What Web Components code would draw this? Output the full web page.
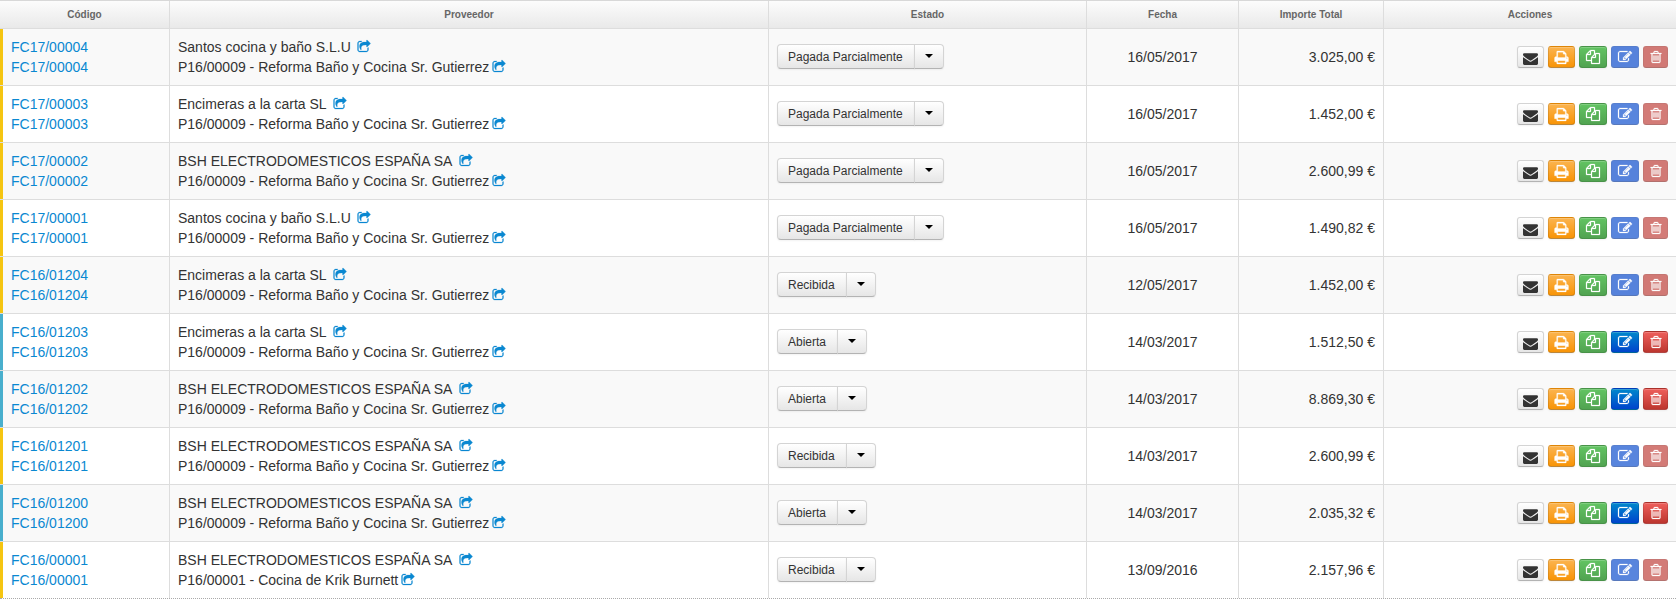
<!DOCTYPE html>
<html lang="es">
<head>
<meta charset="utf-8">
<title>Facturas</title>
<style>
  html, body { margin: 0; background: #fff; height: 599px; overflow: hidden; }
  body { font: 14px/20px "Liberation Sans", Arial, sans-serif; color: #333; }
</style>
</head>
<body>
<invoice-table>
  <invoice-header></invoice-header>
  <invoice-row code="FC17/00004" supplier="Santos cocina y baño S.L.U" project="P16/00009 - Reforma Baño y Cocina Sr. Gutierrez" status="Pagada Parcialmente" date="16/05/2017" total="3.025,00 €" locked></invoice-row>
  <invoice-row code="FC17/00003" supplier="Encimeras a la carta SL" project="P16/00009 - Reforma Baño y Cocina Sr. Gutierrez" status="Pagada Parcialmente" date="16/05/2017" total="1.452,00 €" locked></invoice-row>
  <invoice-row code="FC17/00002" supplier="BSH ELECTRODOMESTICOS ESPAÑA SA" project="P16/00009 - Reforma Baño y Cocina Sr. Gutierrez" status="Pagada Parcialmente" date="16/05/2017" total="2.600,99 €" locked></invoice-row>
  <invoice-row code="FC17/00001" supplier="Santos cocina y baño S.L.U" project="P16/00009 - Reforma Baño y Cocina Sr. Gutierrez" status="Pagada Parcialmente" date="16/05/2017" total="1.490,82 €" locked></invoice-row>
  <invoice-row code="FC16/01204" supplier="Encimeras a la carta SL" project="P16/00009 - Reforma Baño y Cocina Sr. Gutierrez" status="Recibida" date="12/05/2017" total="1.452,00 €" locked></invoice-row>
  <invoice-row code="FC16/01203" supplier="Encimeras a la carta SL" project="P16/00009 - Reforma Baño y Cocina Sr. Gutierrez" status="Abierta" date="14/03/2017" total="1.512,50 €"></invoice-row>
  <invoice-row code="FC16/01202" supplier="BSH ELECTRODOMESTICOS ESPAÑA SA" project="P16/00009 - Reforma Baño y Cocina Sr. Gutierrez" status="Abierta" date="14/03/2017" total="8.869,30 €"></invoice-row>
  <invoice-row code="FC16/01201" supplier="BSH ELECTRODOMESTICOS ESPAÑA SA" project="P16/00009 - Reforma Baño y Cocina Sr. Gutierrez" status="Recibida" date="14/03/2017" total="2.600,99 €" locked></invoice-row>
  <invoice-row code="FC16/01200" supplier="BSH ELECTRODOMESTICOS ESPAÑA SA" project="P16/00009 - Reforma Baño y Cocina Sr. Gutierrez" status="Abierta" date="14/03/2017" total="2.035,32 €"></invoice-row>
  <invoice-row code="FC16/00001" supplier="BSH ELECTRODOMESTICOS ESPAÑA SA" project="P16/00001 - Cocina de Krik Burnett" status="Recibida" date="13/09/2016" total="2.157,96 €" locked></invoice-row>
</invoice-table>

<script>
const ICONS = {
  envelope: 'M1792 710v794q0 66-47 113t-113 47h-1472q-66 0-113-47t-47-113v-794q44 49 101 87 362 246 497 345 57 42 92.5 65.5t94.5 48 110 24.5h2q51 0 110-24.5t94.5-48 92.5-65.5q170-123 498-345 57-39 100-87zm0-294q0 79-49 151t-122 123q-376 261-468 325-10 7-42.5 30.5t-54 38-52 32.5-57.5 27-50 9h-2q-23 0-50-9t-57.5-27-52-32.5-54-38-42.5-30.5q-91-64-262-182.5t-205-142.5q-62-42-117-115.500t-55-136.500q0-78 41.500-130t118.500-52h1472q65 0 112.500 47t47.500 113z',
  print: 'M448 1536h896v-256h-896v256zm0-640h896v-384h-160q-40 0-68-28t-28-68v-160h-640v640zm1152 64q0-26-19-45t-45-19-45 19-19 45 19 45 45 19 45-19 19-45zm128 0v416q0 13-9.500 22.500t-22.500 9.500h-224v160q0 40-28 68t-68 28h-960q-40 0-68-28t-28-68v-160h-224q-13 0-22.500-9.500t-9.500-22.500v-416q0-79 56.500-135.500t135.500-56.500h64v-544q0-40 28-68t68-28h672q40 0 88 20t76 48l152 152q28 28 48 76t20 88v256h64q79 0 135.500 56.500t56.500 135.500z',
  files: 'M1696 384q40 0 68 28t28 68v1216q0 40-28 68t-68 28h-960q-40 0-68-28t-28-68v-288h-544q-40 0-68-28t-28-68v-672q0-40 20-88t48-76l408-408q28-28 76-48t88-20h416q40 0 68 28t28 68v328q68-40 128-40h416zm-544 213l-299 299h299v-299zm-640-384l-299 299h299v-299zm196 647l316-316v-416h-384v416q0 40-28 68t-68 28h-416v640h512v-256q0-40 20-88t48-76zm956 804v-1152h-384v416q0 40-28 68t-68 28h-416v640h896z',
  edit: 'M888 1184l116-116-152-152-116 116v56h96v96h56zm440-720q-16-16-33 1l-350 350q-17 17-1 33t33-1l350-350q17-17 1-33zm80 594v190q0 119-84.500 203.500t-203.500 84.500h-832q-119 0-203.500-84.500t-84.500-203.500v-832q0-119 84.500-203.500t203.500-84.500h832q63 0 117 25 15 7 18 23 3 17-9 29l-49 49q-14 14-32 8-23-6-45-6h-832q-66 0-113 47t-47 113v832q0 66 47 113t113 47h832q66 0 113-47t47-113v-126q0-13 9-22l64-64q15-15 35-7t20 29zm-96-738l288 288-672 672h-288v-288zm444 132l-92 92-288-288 92-92q28-28 68-28t68 28l152 152q28 28 28 68t-28 68z',
  trash: 'M704 736v576q0 14-9 23t-23 9h-64q-14 0-23-9t-9-23v-576q0-14 9-23t23-9h64q14 0 23 9t9 23zm256 0v576q0 14-9 23t-23 9h-64q-14 0-23-9t-9-23v-576q0-14 9-23t23-9h64q14 0 23 9t9 23zm256 0v576q0 14-9 23t-23 9h-64q-14 0-23-9t-9-23v-576q0-14 9-23t23-9h64q14 0 23 9t9 23zm128 724v-948h-896v948q0 22 7 40.500t14.500 27 10.500 8.500h832q3 0 10.500-8.500t14.500-27 7-40.500zm-672-1076h448l-48-117q-7-9-17-11h-317q-10 2-17 11zm928 32v64q0 14-9 23t-23 9h-96v948q0 83-47 143.500t-113 60.500h-832q-66 0-113-62.500t-47-145.500v-944h-96q-14 0-23-9t-9-23v-64q0-14 9-23t23-9h309l70-167q15-37 54-63t79-26h320q40 0 79 26t54 63l70 167h309q14 0 23 9t9 23z',
  share: 'M1472 989v259q0 119-84.500 203.500t-203.500 84.500h-832q-119 0-203.500-84.500t-84.500-203.500v-832q0-119 84.500-203.500t203.500-84.500h255q13 0 22.500 9.500t9.500 22.500q0 27-26 32-77 26-133 60-10 4-16 4h-112q-66 0-113 47t-47 113v832q0 66 47 113t113 47h832q66 0 113-47t47-113v-214q0-19 18-29 28-13 54-37 16-16 35-8 21 9 21 29zm237-496l-384 384q-18 19-45 19-12 0-25-5-39-17-39-59v-192h-160q-323 0-438 131-119 137-74 473 3 23-20 34-8 2-12 2-16 0-26-13-10-14-21-31t-39.500-68.500-49.500-99.500-38.500-114-17.500-122q0-49 3.500-91t14-90 28-88 47-81.500 68.500-74 94.500-61.500 124.500-48.500 159.500-30.500 196.500-11h160v-192q0-42 39-59 13-5 25-5 26 0 45 19l384 384q19 19 19 45t-19 45z'
};

class FaIcon extends HTMLElement {
  connectedCallback() {
    const size = this.getAttribute('size') || 14;
    const weight = this.getAttribute('name') === 'envelope' ? 0 : 30;
    this.attachShadow({ mode: 'open' }).innerHTML = `
      <style>
        :host { display: inline-block; line-height: 0; vertical-align: -2px; }
        :host([name=envelope]) { margin-top: 3px; }
        svg { display: block; fill: currentColor; stroke: currentColor; stroke-width: ${weight}; overflow: visible; }
      </style>
      <svg width="${size}" height="${size}" viewBox="0 0 1792 1792"><path d="${ICONS[this.getAttribute('name')]}"/></svg>
    `;
  }
}
customElements.define('fa-icon', FaIcon);

class InvoiceTable extends HTMLElement {
  constructor() {
    super();
    this.attachShadow({ mode: 'open' }).innerHTML = `
      <style>
        :host {
          display: block;
          --cols: 170px 599px 318px 152px 145px 1fr;
          --line: #ddd;
        }
        ::slotted(invoice-row:nth-of-type(odd)) { background: #f9f9f9; }
        ::slotted(invoice-row:last-child) { border-bottom: 1px dotted #aaa; }
      </style>
      <slot></slot>
    `;
  }
}
customElements.define('invoice-table', InvoiceTable);

class InvoiceHeader extends HTMLElement {
  constructor() {
    super();
    const labels = ['Código', 'Proveedor', 'Estado', 'Fecha', 'Importe Total', 'Acciones'];
    this.attachShadow({ mode: 'open' }).innerHTML = `
      <style>
        :host {
          display: grid;
          grid-template-columns: var(--cols);
          height: 27px;
          border-top: 1px solid #d8d8d8;
          border-bottom: 1px solid var(--line);
          background: linear-gradient(#fcfcfc, #e9e9e9);
          font-size: 10px;
          font-weight: bold;
          line-height: 27px;
          color: #666;
          text-align: center;
        }
        div { border-right: 1px solid var(--line); }
        div:last-child { border-right: 0; }
      </style>
      ${labels.map(l => `<div>${l}</div>`).join('')}
    `;
  }
}
customElements.define('invoice-header', InvoiceHeader);

class StatusButton extends HTMLElement {
  constructor() {
    super();
    this.attachShadow({ mode: 'open' }).innerHTML = `
      <style>
        :host { display: inline-flex; font-size: 12px; line-height: 18px; color: #333; }
        .part {
          height: 25px;
          box-sizing: border-box;
          padding: 3px 11px 3px 10px;
          background: linear-gradient(#fff, #e6e6e6);
          border: 1px solid #d4d4d4;
          border-bottom-color: #b3b3b3;
          box-shadow: inset 0 1px 0 rgba(255,255,255,.2), 0 1px 2px rgba(0,0,0,.05);
        }
        .label { border-radius: 4px 0 0 4px; }
        .toggle {
          width: 30px;
          margin-left: -1px;
          border-radius: 0 4px 4px 0;
          display: flex;
          align-items: center;
          justify-content: center;
          padding: 0;
        }
        .caret { border-top: 4px solid #000; border-left: 4px solid transparent; border-right: 4px solid transparent; }
      </style>
      <div class="part label"><slot></slot></div>
      <div class="part toggle"><span class="caret"></span></div>
    `;
  }
}
customElements.define('status-button', StatusButton);

class ActionButton extends HTMLElement {
  constructor() {
    super();
    this.attachShadow({ mode: 'open' }).innerHTML = `
      <style>
        :host {
          display: flex;
          align-items: center;
          justify-content: center;
          box-sizing: border-box;
          height: 22px;
          border: 1px solid rgba(0,0,0,.1);
          border-bottom-color: rgba(0,0,0,.25);
          border-radius: 3px;
          color: #fff;
          box-shadow: inset 0 1px 0 rgba(255,255,255,.2), 0 1px 2px rgba(0,0,0,.05);
        }
        :host([kind=mail]) { width: 27px; background: linear-gradient(#fff, #e6e6e6); color: #333; border-color: #d4d4d4 #d4d4d4 #b3b3b3; }
        :host([kind=print]) { width: 27px; background: linear-gradient(#fbb450, #f89406); }
        :host([kind=copy]) { width: 28px; background: linear-gradient(#62c462, #51a351); }
        :host([kind=edit]) { width: 28px; background: linear-gradient(#08c, #04c); }
        :host([kind=remove]) { width: 25px; background: linear-gradient(#ee5f5b, #bd362f); }
        /* disabled state drops the gradient */
        :host([kind=edit][off]) { background: #04c; }
        :host([kind=remove][off]) { background: #bd362f; }
        :host([off]) { opacity: .65; box-shadow: none; }
      </style>
      <slot></slot>
    `;
  }
}
customElements.define('action-button', ActionButton);

class InvoiceRow extends HTMLElement {
  connectedCallback() {
    const a = n => this.getAttribute(n);
    const off = this.hasAttribute('locked') ? 'off' : '';
    const mark = a('status') === 'Abierta' ? '#49afcd' : '#f5c511';
    this.attachShadow({ mode: 'open' }).innerHTML = `
      <style>
        :host {
          display: grid;
          grid-template-columns: var(--cols);
          border-bottom: 1px solid var(--line);
          height: 57px;
          box-sizing: border-box;
        }
        .cell {
          padding: 8px;
          border-right: 1px solid var(--line);
          display: flex;
          align-items: center;
          min-width: 0;
        }
        .cell:last-child { border-right: 0; }
        .code { flex-direction: column; align-items: flex-start; border-left: 3px solid ${mark}; }
        .who { flex-direction: column; align-items: flex-start; }
        a { color: #0a88d1; text-decoration: none; }
        .who fa-icon { color: #0a88d1; width: 13px; margin-left: -1.5px; }
        .state { padding-bottom: 10px; }
        .date { justify-content: center; }
        .total { justify-content: flex-end; }
        .actions { justify-content: flex-end; gap: 4px; }
      </style>
      <div class="cell code">
        <a href="#">${a('code')}</a>
        <a href="#">${a('code')}</a>
      </div>
      <div class="cell who">
        <div>${a('supplier')}&nbsp; <fa-icon name="share" size="14"></fa-icon></div>
        <div>${a('project')} <fa-icon name="share" size="14"></fa-icon></div>
      </div>
      <div class="cell state"><status-button>${a('status')}</status-button></div>
      <div class="cell date">${a('date')}</div>
      <div class="cell total">${a('total')}</div>
      <div class="cell actions">
        <action-button kind="mail"><fa-icon name="envelope" size="15"></fa-icon></action-button>
        <action-button kind="print"><fa-icon name="print" size="15"></fa-icon></action-button>
        <action-button kind="copy"><fa-icon name="files"></fa-icon></action-button>
        <action-button kind="edit" ${off}><fa-icon name="edit"></fa-icon></action-button>
        <action-button kind="remove" ${off}><fa-icon name="trash"></fa-icon></action-button>
      </div>
    `;
  }
}
customElements.define('invoice-row', InvoiceRow);
</script>
</body>
</html>
